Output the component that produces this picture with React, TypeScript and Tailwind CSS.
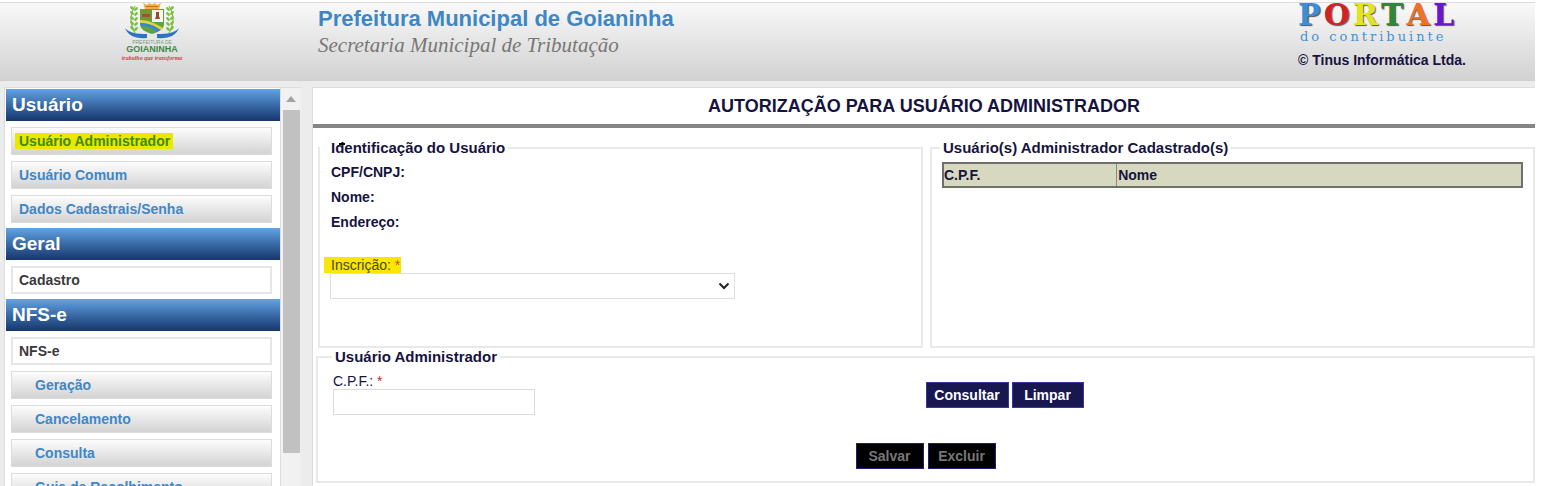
import { ReactNode } from "react";

type Item = { label: string; kind: "link" | "title" | "sub"; active?: boolean };

const sections: { title: string; items: Item[] }[] = [
  {
    title: "Usuário",
    items: [
      { label: "Usuário Administrador", kind: "link", active: true },
      { label: "Usuário Comum", kind: "link" },
      { label: "Dados Cadastrais/Senha", kind: "link" },
    ],
  },
  { title: "Geral", items: [{ label: "Cadastro", kind: "title" }] },
  {
    title: "NFS-e",
    items: [
      { label: "NFS-e", kind: "title" },
      { label: "Geração", kind: "sub" },
      { label: "Cancelamento", kind: "sub" },
      { label: "Consulta", kind: "sub" },
      { label: "Guia de Recolhimento", kind: "sub" },
    ],
  },
];

const portal = [
  { ch: "P", cls: "text-[#3b8fd6]" },
  { ch: "O", cls: "text-[#cf2326]" },
  { ch: "R", cls: "text-[#e3e51c]" },
  { ch: "T", cls: "text-[#2c8a35]" },
  { ch: "A", cls: "text-[#f0702a]" },
  { ch: "L", cls: "text-[#6a14d6]" },
];

function Crest() {
  return (
    <svg viewBox="0 0 54 36" className="h-9 w-[54px]" aria-hidden="true">
      <g fill="#7cc043">
        <path d="M10 30C5 21 5 11 10 3" fill="none" stroke="#7cc043" strokeWidth="1.2" />
        <path d="M44 30C49 21 49 11 44 3" fill="none" stroke="#7cc043" strokeWidth="1.2" />
        {[5, 10, 15, 20, 25].map((y) => (
          <g key={y}>
            <ellipse cx="7" cy={y} rx="2.3" ry="1.3" transform={`rotate(40 7 ${y})`} />
            <ellipse cx="11" cy={y + 1} rx="2.3" ry="1.3" transform={`rotate(-40 11 ${y + 1})`} />
            <ellipse cx="47" cy={y} rx="2.3" ry="1.3" transform={`rotate(-40 47 ${y})`} />
            <ellipse cx="43" cy={y + 1} rx="2.3" ry="1.3" transform={`rotate(40 43 ${y + 1})`} />
          </g>
        ))}
      </g>
      <path d="M18 0l4 2 2-2 3 1.500 3-1.500 2 2 4-2-2 6H20z" fill="#eeb23c" />
      <path d="M21 3.500h12" stroke="#c9632d" strokeWidth="1" />
      <path d="M15 6h24v15c0 5-5 8-12 10C20 29 15 26 15 21z" fill="#5aa63c" />
      <path d="M15 6h12v11H15z" fill="#6f9a35" />
      <path d="M17 11h8v3h-8z" fill="#a0522d" />
      <path d="M27 7h11v12H27z" fill="#f7f7f2" />
      <path d="M31 9h3v4l1 3h-5l1-3z" fill="#9b4a32" />
      <path d="M15 17c8 0 15 3 23 8l-2 2c-7-5-13-7-21-7z" fill="#e5cf4b" />
      <path d="M15 20c8 0 14 3 20 7l-3 2c-5-4-10-6-16-6z" fill="#3d86cc" />
      <path d="M0 25c4 5 12 6 22 6v4C11 36 3 33 0 25z" fill="#2f73c4" />
      <path d="M54 25c-4 5-12 6-22 6v4c11 1 19-2 22-10z" fill="#2f73c4" />
    </svg>
  );
}

function Box({
  title,
  className,
  legendClass,
  children,
}: {
  title: ReactNode;
  className: string;
  legendClass: string;
  children: ReactNode;
}) {
  return (
    <fieldset className={`min-w-0 border-2 border-[#e9e9e9] ${className}`}>
      <legend className={`px-[3px] text-[15px] leading-[18px] font-bold ${legendClass}`}>{title}</legend>
      {children}
    </fieldset>
  );
}

export default function App() {
  return (
    <div className="flex h-screen flex-col overflow-hidden bg-white pt-0.5 pr-1.5 font-['Liberation_Sans',Arial,sans-serif] text-[#16133f]">
      <header className="flex h-[79px] shrink-0 border-t border-b border-t-[#dcdcdc] border-b-[#cfcfcf] bg-gradient-to-b from-[#f9f9f9] to-[#d2d2d2]">
        <div className="flex w-[304px] shrink-0 flex-col items-center">
          <Crest />
          <span className="mt-px text-[5px] leading-[5px] text-[#7d9a7d]">PREFEITURA DE</span>
          <span className="text-[9px] leading-[9px] font-bold text-[#3b8a45]">GOIANINHA</span>
          <span className="font-['Liberation_Serif',serif] text-[6px] leading-[8px] font-bold text-[#d8414a] italic">
            trabalho que transforma
          </span>
        </div>
        <div className="flex-1 pt-0.5 pl-3.5">
          <h1 className="text-[22px] leading-7 font-bold text-[#3e87c6]">Prefeitura Municipal de Goianinha</h1>
          <p className="font-['Liberation_Serif','Times_New_Roman',serif] text-[21px] leading-6 text-[#777] italic">
            Secretaria Municipal de Tributação
          </p>
        </div>
        <div className="w-[237px] shrink-0">
          <div className="flex h-6 w-[156px] items-center justify-between font-['DejaVu_Serif',serif] text-[30px] leading-9 font-bold">
            {portal.map((l) => (
              <span key={l.ch} className={`${l.cls} [text-shadow:1px_1px_1px_#555]`}>
                {l.ch}
              </span>
            ))}
          </div>
          <p className="pl-0.5 font-['DejaVu_Serif',serif] text-[13px] leading-5 tracking-[3px] text-[#3f93d8]">
            do contribuinte
          </p>
          <p className="mt-[3px] text-[14px] leading-5 font-bold">© Tinus Informática Ltda.</p>
        </div>
      </header>

      <div className="flex min-h-0 flex-1 bg-[#ececec] pt-1.5">
        <aside className="ml-1 flex w-[297px] shrink-0 overflow-hidden border-t border-l border-[#ddd]">
          <nav className="flex-1 overflow-hidden bg-white pt-px pl-px">
            {sections.map((s) => (
              <section key={s.title} className="pb-[5px]">
                <h2 className="h-8 bg-gradient-to-b from-[#62a3e4] to-[#17376c] pl-1.5 text-[19px] leading-8 font-bold text-white">
                  {s.title}
                </h2>
                <ul className="mt-1.5 mr-2 ml-[5px] flex flex-col gap-1.5 text-[14px] leading-[26px] font-bold">
                  {s.items.map((i) => (
                    <li
                      key={i.label}
                      className={
                        i.kind === "title"
                          ? "h-7 border-2 border-[#e6e6e6] bg-white pl-1.5 leading-6 text-[#3a3a3a]"
                          : "h-7 border border-[#dcdcdc] bg-gradient-to-b from-[#fdfdfd] to-[#d3d3d3] text-[#3f87c6]"
                      }
                    >
                      {i.kind === "title" ? (
                        i.label
                      ) : (
                        <a href="#" className={i.kind === "sub" ? "block pl-[19px]" : "block pl-[3px]"}>
                          <span className={i.active ? "bg-[#ebe800] pr-[3px] pl-1 text-[#3f8a08]" : "pl-1"}>{i.label}</span>
                        </a>
                      )}
                    </li>
                  ))}
                </ul>
              </section>
            ))}
          </nav>
          <div className="flex w-[21px] shrink-0 flex-col items-center border-l border-[#ddd] bg-[#f1f1f1]">
            <svg viewBox="0 0 10 6" className="my-2 h-1.5 w-2.5 shrink-0" aria-hidden="true">
              <path d="M0 6L5 0l5 6z" fill="#a3a3a3" />
            </svg>
            <div className="mb-[33px] w-[17px] flex-1 bg-[#c1c1c1]" />
          </div>
        </aside>

        <main className="ml-[11px] flex-1 border-t border-l border-[#ddd] bg-white">
          <h2 className="border-b-4 border-[#858585] text-center text-[18px] leading-9 font-bold">
            AUTORIZAÇÃO PARA USUÁRIO ADMINISTRADOR
          </h2>
          <div className="grid grid-cols-2 gap-[7px] pt-[11px] pl-[5px]">
            <Box
              className="h-[209px]"
              legendClass=""
              title={
                <span className="relative block pl-2">
                  Identificação do Usuário
                  <span className="absolute top-1 left-4 h-0.5 w-1.5 bg-black" />
                </span>
              }
            >
              <div className="pt-[3px] pl-[11px] text-[14px] leading-[25px] font-bold">
                <p>CPF/CNPJ:</p>
                <p>Nome:</p>
                <p>Endereço:</p>
              </div>
              <div className="pt-[22px] pl-1 text-[14px]">
                <label htmlFor="inscricao" className="block w-fit bg-[#fbe600] pr-px pl-[7px] leading-4 text-[#4a4a10]">
                  Inscrição: <span className="text-[#c0522d]">*</span>
                </label>
                <div className="relative ml-1.5 w-[405px]">
                  <select id="inscricao" className="block h-[26px] w-full appearance-none border border-[#dedede] bg-white">
                    <option></option>
                  </select>
                  <svg viewBox="0 0 12 8" className="pointer-events-none absolute top-[9px] right-[5px] h-2 w-3" aria-hidden="true">
                    <path d="M1.500 1.500L6 6l4.500-4.500" fill="none" stroke="#222" strokeWidth="2" />
                  </svg>
                </div>
              </div>
            </Box>
            <Box className="h-[209px]" legendClass="ml-2" title="Usuário(s) Administrador Cadastrado(s)">
              <table className="mx-2.5 mt-[5px] w-[calc(100%-20px)] border-2 border-[#70706a] bg-[#d6d8bf] text-left text-[14px] leading-[22px]">
                <thead>
                  <tr>
                    <th className="w-[30%] border-r border-[#8a8a80]">C.P.F.</th>
                    <th className="pl-px">Nome</th>
                  </tr>
                </thead>
              </table>
            </Box>
          </div>
          <div className="pl-[3px]">
            <Box className="h-[135px]" legendClass="ml-3.5" title="Usuário Administrador">
              <div className="grid grid-cols-2">
                <div className="pt-[7px] pl-[15px] text-[14px]">
                  <label htmlFor="cpf" className="block leading-4">
                    C.P.F.: <span className="text-[#d22]">*</span>
                  </label>
                  <input id="cpf" type="text" className="block h-[26px] w-[202px] border border-[#dcdcdc] bg-white px-1" />
                </div>
                <div className="flex gap-[3px] pt-4 text-[14px] font-bold text-white">
                  <button className="h-[26px] w-[83px] border border-[#3a36a0] bg-[#19174f]">Consultar</button>
                  <button className="h-[26px] w-[72px] border border-[#3a36a0] bg-[#19174f]">Limpar</button>
                </div>
              </div>
              <div className="mt-7 flex justify-center gap-1 text-[14px] font-bold text-[#777]">
                <button disabled className="h-[26px] w-[68px] border border-[#211e7a] bg-black">
                  Salvar
                </button>
                <button disabled className="h-[26px] w-[68px] border border-[#211e7a] bg-black">
                  Excluir
                </button>
              </div>
            </Box>
          </div>
        </main>
      </div>
    </div>
  );
}
